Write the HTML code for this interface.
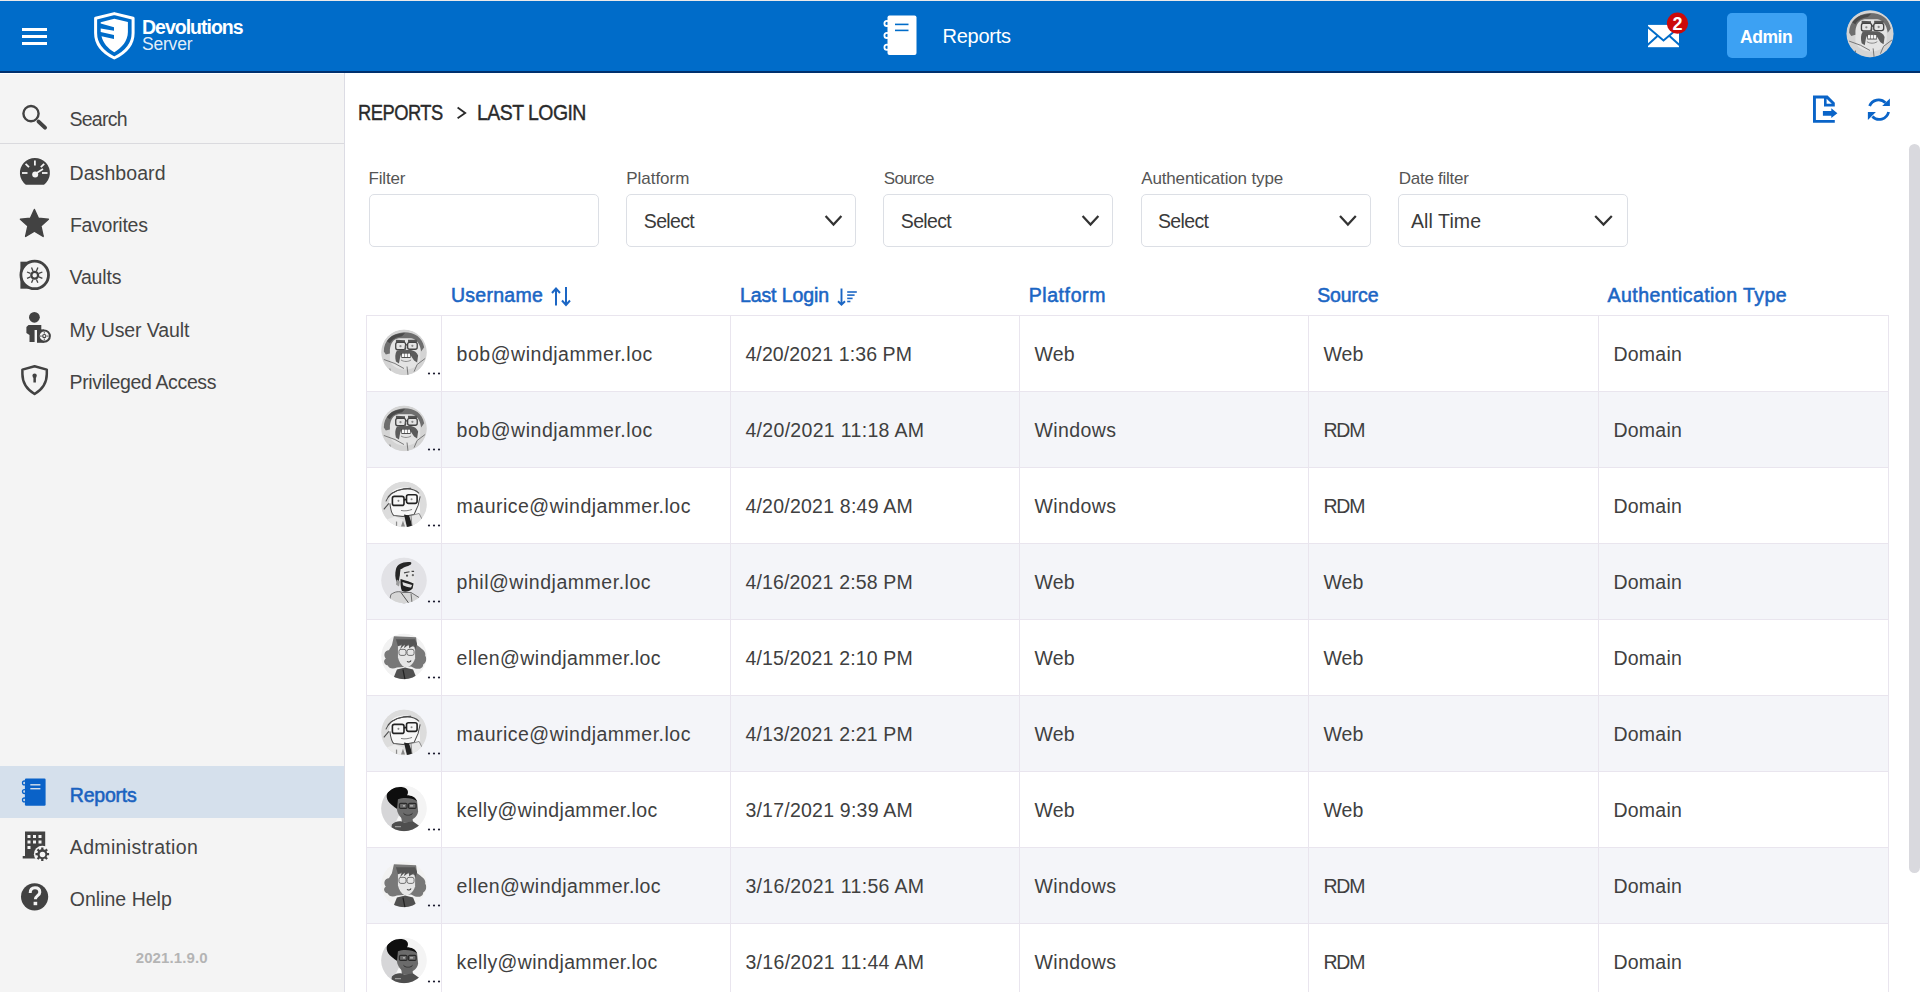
<!DOCTYPE html>
<html><head><meta charset="utf-8">
<style>
*{box-sizing:border-box;margin:0;padding:0}
html,body{width:1920px;height:992px;overflow:hidden;background:#fff;font-family:"Liberation Sans",sans-serif;color:#3a3a3a;position:relative}
.a{position:absolute}
.t{position:absolute;white-space:nowrap;line-height:1}
svg{position:absolute;overflow:visible}
</style></head>
<body>
<div class="a" style="left:0;top:0;width:1920px;height:1px;background:#ebe9e9"></div>
<div class="a" style="left:0;top:1px;width:1920px;height:70px;background:#006cc9"></div>
<div class="a" style="left:0;top:71px;width:1920px;height:2px;background:#00306e"></div>
<div class="a" style="left:0;top:74px;width:344px;height:918px;background:#f4f4f4"></div>
<div class="a" style="left:344px;top:73px;width:1px;height:919px;background:#dcdce4"></div>
<div class="a" style="left:0;top:143px;width:344px;height:1px;background:#dadade"></div>
<div class="a" style="left:0;top:766px;width:344px;height:52px;background:#d5e0ec"></div>
<div class="a" style="left:22px;top:28px;width:25px;height:3px;background:#fff"></div>
<div class="a" style="left:22px;top:35px;width:25px;height:3px;background:#fff"></div>
<div class="a" style="left:22px;top:42px;width:25px;height:3px;background:#fff"></div>
<div class="a" style="left:1727px;top:13px;width:80px;height:45px;background:#3ca1f3;border-radius:5px"></div>
<div class="a" style="left:369px;top:194px;width:230px;height:53px;border:1px solid #dcdfe5;border-radius:5px;background:#fff"></div>
<div class="a" style="left:626px;top:194px;width:230px;height:53px;border:1px solid #dcdfe5;border-radius:5px;background:#fff"></div>
<div class="a" style="left:883px;top:194px;width:230px;height:53px;border:1px solid #dcdfe5;border-radius:5px;background:#fff"></div>
<div class="a" style="left:1141px;top:194px;width:230px;height:53px;border:1px solid #dcdfe5;border-radius:5px;background:#fff"></div>
<div class="a" style="left:1398px;top:194px;width:230px;height:53px;border:1px solid #dcdfe5;border-radius:5px;background:#fff"></div>
<div class="a" style="left:366px;top:391px;width:1523px;height:76px;background:#f4f5f9"></div>
<div class="a" style="left:366px;top:543px;width:1523px;height:76px;background:#f4f5f9"></div>
<div class="a" style="left:366px;top:695px;width:1523px;height:76px;background:#f4f5f9"></div>
<div class="a" style="left:366px;top:847px;width:1523px;height:76px;background:#f4f5f9"></div>
<div class="a" style="left:366px;top:315px;width:1523px;height:1px;background:#e9e5ee"></div>
<div class="a" style="left:366px;top:391px;width:1523px;height:1px;background:#e9e5ee"></div>
<div class="a" style="left:366px;top:467px;width:1523px;height:1px;background:#e9e5ee"></div>
<div class="a" style="left:366px;top:543px;width:1523px;height:1px;background:#e9e5ee"></div>
<div class="a" style="left:366px;top:619px;width:1523px;height:1px;background:#e9e5ee"></div>
<div class="a" style="left:366px;top:695px;width:1523px;height:1px;background:#e9e5ee"></div>
<div class="a" style="left:366px;top:771px;width:1523px;height:1px;background:#e9e5ee"></div>
<div class="a" style="left:366px;top:847px;width:1523px;height:1px;background:#e9e5ee"></div>
<div class="a" style="left:366px;top:923px;width:1523px;height:1px;background:#e9e5ee"></div>
<div class="a" style="left:366px;top:999px;width:1523px;height:1px;background:#e9e5ee"></div>
<div class="a" style="left:366px;top:315px;width:1px;height:677px;background:#e9e5ee"></div>
<div class="a" style="left:441px;top:315px;width:1px;height:677px;background:#e9e5ee"></div>
<div class="a" style="left:730px;top:315px;width:1px;height:677px;background:#e9e5ee"></div>
<div class="a" style="left:1019px;top:315px;width:1px;height:677px;background:#e9e5ee"></div>
<div class="a" style="left:1308px;top:315px;width:1px;height:677px;background:#e9e5ee"></div>
<div class="a" style="left:1598px;top:315px;width:1px;height:677px;background:#e9e5ee"></div>
<div class="a" style="left:1888px;top:315px;width:1px;height:677px;background:#e9e5ee"></div>
<div class="a" style="left:1909px;top:144px;width:11px;height:729px;background:#d9d9de;border-radius:6px"></div>
<svg width="1920" height="992" style="left:0;top:0" viewBox="0 0 1920 992">
<!-- logo shield -->
<path d="M114.3 13.6 L95.6 18.3 L95.6 33 C95.6 44 103 52.5 114.3 58 C125.6 52.5 133.1 44 133.1 33 L133.1 18.3 Z" fill="none" stroke="#fff" stroke-width="3" stroke-linejoin="round"/>
<path d="M114.3 18.7 L100.7 22.3 L100.7 23.5 L114 27.2 L114 30.8 L100.7 28.4 L100.7 32 L114 35 L114 39 L101.5 36.2 C103 43 108 48.5 114.3 52.2 C121.5 48 127.9 41 127.9 32 L127.9 22 Z" fill="#fff"/>
<!-- header reports icon -->
<rect x="887.5" y="15.6" width="29" height="39.4" rx="2" fill="#fff"/>
<g fill="none" stroke="#fff" stroke-width="1.8">
<circle cx="887" cy="23.4" r="2.6"/><circle cx="887" cy="35.4" r="2.6"/><circle cx="887" cy="47.2" r="2.6"/>
</g>
<g stroke="#006cc9" stroke-width="1.6">
<line x1="895" y1="24.4" x2="908.5" y2="24.4"/><line x1="895" y1="30.4" x2="908.5" y2="30.4"/>
</g>
<!-- envelope -->
<rect x="1648" y="24.9" width="31" height="22.3" fill="#fff"/>
<g fill="none" stroke="#006cc9" stroke-width="2">
<polyline points="1647,26.5 1663.5,40.4 1680,26.5"/>
<line x1="1647" y1="45.5" x2="1657.5" y2="36"/><line x1="1680" y1="45.5" x2="1669.5" y2="36"/>
</g>
<circle cx="1677.5" cy="23.2" r="10.6" fill="#cc0a0a"/>
<text x="1677.6" y="30.4" font-family="Liberation Sans" font-weight="700" font-size="18" fill="#fff" text-anchor="middle">2</text>
<!-- sidebar icons -->
<g fill="#424242" stroke="#424242">
<!-- search -->
<circle cx="31" cy="113.6" r="7.6" fill="none" stroke-width="2.4"/>
<line x1="38.6" y1="121.6" x2="45" y2="127.6" stroke-width="4" stroke-linecap="round"/>
</g>
<!-- dashboard gauge -->
<path d="M25.8 184.8 A15 15 0 1 1 44 184.8 Z" fill="#424242"/>
<g stroke="#f4f4f4" stroke-width="1.8">
<line x1="34.9" y1="160.5" x2="34.9" y2="165.5"/>
<line x1="25.6" y1="163.8" x2="29" y2="167.2"/>
<line x1="44.2" y1="163.8" x2="40.8" y2="167.2"/>
<line x1="22" y1="173" x2="27.5" y2="173"/>
<line x1="42" y1="173" x2="47.5" y2="173"/>
<line x1="35" y1="174" x2="43" y2="169" stroke-width="1.6"/>
</g>
<circle cx="35.2" cy="174.5" r="3" fill="#f4f4f4"/>
<!-- star -->
<path d="M34.4 209.5 L38.4 218.3 L48.4 219.3 L40.9 225.9 L43.2 236.5 L34.4 231.2 L25.6 236.5 L27.9 225.9 L20.4 219.3 L30.4 218.3 Z" fill="#424242" stroke="#424242" stroke-width="1.4" stroke-linejoin="round"/>
<!-- vaults -->
<path d="M20.4 261.7 L35 261.7 L35 288.7 L20.4 288.7 Z" fill="#424242"/>
<circle cx="34.7" cy="274.9" r="13.8" fill="#f4f4f4" stroke="#424242" stroke-width="2.8"/>
<circle cx="34.7" cy="275.2" r="3.4" fill="none" stroke="#424242" stroke-width="2.3"/>
<g stroke="#424242" stroke-width="1.3">
<line x1="38.95" y1="276.96" x2="42.37" y2="278.38"/><line x1="36.46" y1="279.45" x2="37.88" y2="282.87"/><line x1="32.94" y1="279.45" x2="31.52" y2="282.87"/><line x1="30.45" y1="276.96" x2="27.03" y2="278.38"/><line x1="30.45" y1="273.44" x2="27.03" y2="272.02"/><line x1="32.94" y1="270.95" x2="31.52" y2="267.53"/><line x1="36.46" y1="270.95" x2="37.88" y2="267.53"/><line x1="38.95" y1="273.44" x2="42.37" y2="272.02"/>
</g>
<!-- my user vault -->
<circle cx="34.4" cy="317.3" r="5.4" fill="#424242"/>
<path d="M28.5 325 L41.3 325 L41.3 330 L34.6 330 L34.6 342 L29.5 342 L29.5 335 L26.4 333 L26.4 327 Z" fill="#424242"/>
<path d="M37 329.4 L44 329.4 L44 342.8 L37 342.8 Z" fill="#424242"/>
<circle cx="44.3" cy="336.1" r="5.6" fill="#f4f4f4" stroke="#424242" stroke-width="2"/>
<circle cx="44.3" cy="336.1" r="1.6" fill="none" stroke="#424242" stroke-width="1.2"/>
<g stroke="#424242" stroke-width="0.9">
<line x1="44.3" y1="331.8" x2="44.3" y2="333.6"/><line x1="44.3" y1="338.6" x2="44.3" y2="340.4"/>
<line x1="40" y1="336.1" x2="41.8" y2="336.1"/><line x1="46.8" y1="336.1" x2="48.6" y2="336.1"/>
</g>
<!-- privileged shield -->
<path d="M34.6 366.3 L22.4 369.6 L22.4 374 C22.4 383 27 389.5 34.6 394 C42.2 389.5 46.8 383 46.8 374 L46.8 369.6 Z" fill="none" stroke="#424242" stroke-width="2.5" stroke-linejoin="round"/>
<circle cx="34.6" cy="375.8" r="2.2" fill="#424242"/>
<rect x="33.4" y="376" width="2.5" height="6.5" fill="#424242"/>
<!-- reports icon (blue) -->
<rect x="24.9" y="778.5" width="20.7" height="27.2" rx="1.2" fill="#0a62c8"/>
<g fill="none" stroke="#0a62c8" stroke-width="1.3">
<circle cx="24.4" cy="782.9" r="1.9"/><circle cx="24.4" cy="791.6" r="1.9"/><circle cx="24.4" cy="799.9" r="1.9"/>
</g>
<g stroke="#d5e0ec" stroke-width="1.4">
<line x1="30.3" y1="784.8" x2="40.4" y2="784.8"/><line x1="30.3" y1="788.7" x2="40.4" y2="788.7"/>
</g>
<!-- administration -->
<path d="M25 831.5 L45.2 831.5 L45.2 858.4 L22.7 858.4 L22.7 856 L25 856 Z" fill="#424242"/>
<g fill="#f4f4f4">
<rect x="27.5" y="835" width="3" height="3"/><rect x="33" y="835" width="3" height="3"/><rect x="38.5" y="835" width="3" height="3"/>
<rect x="27.5" y="840.5" width="3" height="3"/><rect x="33" y="840.5" width="3" height="3"/><rect x="38.5" y="840.5" width="3" height="3"/>
<rect x="27.5" y="846" width="3" height="3"/>
</g>
<circle cx="42.3" cy="854.2" r="8.4" fill="#f4f4f4"/>
<path d="M47.18 853.11 L49.10 853.03 L49.10 855.37 L47.18 855.29 L46.92 856.11 L46.52 856.88 L47.93 858.18 L46.28 859.83 L44.98 858.42 L44.21 858.82 L43.39 859.08 L43.47 861.00 L41.13 861.00 L41.21 859.08 L40.39 858.82 L39.62 858.42 L38.32 859.83 L36.67 858.18 L38.08 856.88 L37.68 856.11 L37.42 855.29 L35.50 855.37 L35.50 853.03 L37.42 853.11 L37.68 852.29 L38.08 851.52 L36.67 850.22 L38.32 848.57 L39.62 849.98 L40.39 849.58 L41.21 849.32 L41.13 847.40 L43.47 847.40 L43.39 849.32 L44.21 849.58 L44.98 849.98 L46.28 848.57 L47.93 850.22 L46.52 851.52 L46.92 852.29 Z" fill="#424242"/>
<circle cx="42.5" cy="854.5" r="2.8" fill="#f4f4f4"/>
<!-- help -->
<circle cx="34.6" cy="896.8" r="13.6" fill="#424242"/>
<path d="M30.2 893 C30.2 889.5 32.2 887.8 35 887.8 C38 887.8 39.8 889.6 39.8 892.2 C39.8 895.5 35.4 895.8 35.4 899.2" fill="none" stroke="#f4f4f4" stroke-width="3"/>
<rect x="33.6" y="901.8" width="3.6" height="3.4" fill="#f4f4f4"/>
<!-- breadcrumb chevron -->
<polyline points="457.6,107.6 465.2,112.9 457.6,118.2" fill="none" stroke="#2a2a2a" stroke-width="1.8"/>
<!-- select chevrons -->
<g fill="none" stroke="#333" stroke-width="2.2">
<polyline points="825.6,216 833.5,224.6 841.4,216"/>
<polyline points="1082.6,216 1090.5,224.6 1098.4,216"/>
<polyline points="1340,216 1347.9,224.6 1355.8,216"/>
<polyline points="1595.2,216 1603.5,224.6 1611.8,216"/>
</g>
<!-- export icon -->
<path d="M1813 95.6 L1827.6 95.6 L1834.8 102.7 L1834.8 106.4 L1824 106.4 L1824 98.4 L1815.9 98.4 L1815.9 120 L1834.8 120 L1834.8 122.8 L1813 122.8 Z M1826.6 98.8 L1826.6 103.8 L1831.8 103.8 Z" fill="#0a64c8" fill-rule="evenodd"/>
<path d="M1822.9 110.9 L1831.3 110.9 L1831.3 108.3 L1837.4 113.2 L1831.3 118.1 L1831.3 115.8 L1822.9 115.8 Z" fill="#0a64c8"/>
<!-- refresh icon -->
<g fill="none" stroke="#0a64c8" stroke-width="2.8">
<path d="M1869.6 106 A9.6 9.6 0 0 1 1885.5 102.8"/>
<path d="M1888.6 112 A9.6 9.6 0 0 1 1872.4 116.5"/>
</g>
<path d="M1889.9 98.4 L1889.9 105.9 L1882.2 105.9 Z" fill="#0a64c8"/>
<path d="M1867.9 112 L1875.9 112 L1867.9 120 Z" fill="#0a64c8"/>
<!-- sort icons -->
<g fill="none" stroke="#1b66c4" stroke-width="2">
<path d="M556 305.5 L556 289 M552 293 L556 288.5 L560 293"/>
<path d="M566 287 L566 304.5 M562 300.5 L566 305 L570 300.5"/>
<path d="M841.5 288.5 L841.5 304.5 M838 301.3 L841.5 304.7 L845 301.3" stroke-width="1.9"/>
</g>
<g stroke="#1b66c4" stroke-width="1.6">
<line x1="847.2" y1="292" x2="856.8" y2="292"/><line x1="847.2" y1="295.1" x2="854.6" y2="295.1"/><line x1="847.2" y1="298.4" x2="852.6" y2="298.4"/><line x1="847.2" y1="301.5" x2="850.4" y2="301.5"/>
</g>
</svg>
<svg width="1920" height="992" style="left:0;top:0" viewBox="0 0 1920 992">
<defs>
<clipPath id="avc"><circle cx="23" cy="23" r="22.6"/></clipPath>
<symbol id="av-bob" viewBox="0 0 46 46"><g clip-path="url(#avc)">
<circle cx="23" cy="23" r="23" fill="#d4d4d4"/>
<path d="M9 16 C10 9 16 6 24 6 C32 6 38 9 39 16 L39 30 C38 36 32 40 24 40 C16 40 10 36 9 30 Z" fill="#e4e4e4"/>
<path d="M3 22 C3 12 10 4 23 3 C34 3 41 8 43 18 L40 22 C39 15 36 10 30 9 L18 9 C12 10 10 14 9 20 L9 24 L5 25 Z" fill="#6e6e6e"/>
<path d="M6 12 C10 6 16 4 24 4 L21 7 C15 8 11 10 9 14 Z" fill="#4a4a4a"/>
<path d="M15 10.5 L24 11 L24 13 L15 13.5 Z M27 10.5 L36 10.5 L36 13 L27 13 Z" fill="#555"/>
<g fill="none" stroke="#444" stroke-width="1.3">
<rect x="14.8" y="13" width="9.8" height="7.3" rx="2"/><rect x="26.6" y="13" width="9.5" height="6.9" rx="2"/>
<line x1="24.6" y1="15.5" x2="26.6" y2="15.5"/>
</g>
<circle cx="19.5" cy="16.8" r="1.1" fill="#888"/><circle cx="31.3" cy="16.5" r="1.1" fill="#888"/>
<path d="M19 20.5 L30 20.5 C33 21 36 23 37 26 L36 33 L33 31 C31 28 30 26 28 24 L21 24 C19 26 19 29 18 34 L15 32 C14 28 14 24 16 21 Z" fill="#5c5c5c"/>
<path d="M20 23.6 L29.8 23.6 L29.5 28.5 L20.5 28.5 Z" fill="#4a4a4a"/>
<g fill="#f8f8f8"><rect x="21" y="24.2" width="2.4" height="3.4"/><rect x="23.9" y="24.2" width="2.4" height="3.4"/><rect x="26.8" y="24.2" width="2.2" height="3.4"/></g>
<path d="M20 30.5 C23 32.5 27 32.5 30 30.5" fill="none" stroke="#777" stroke-width="0.8"/>
<path d="M24.2 16 L23.6 21 L25.6 21" fill="none" stroke="#666" stroke-width="0.8"/>
<g fill="none" stroke="#707070" stroke-width="0.9">
<path d="M3 30 L14 34 L23 39"/><path d="M44 29 L36 35 L33 42"/><path d="M9 39 L9.5 44"/><path d="M26 37 L27 46"/>
</g>
</g></symbol>

<symbol id="av-maurice" viewBox="0 0 46 46"><g clip-path="url(#avc)">
<circle cx="23" cy="23" r="23" fill="#dcdcdc"/>
<path d="M10 12 C14 5 30 4 38 11 L39 32 L30 34 L12 34 L8 22 Z" fill="#f7f7f7"/>
<g fill="none" stroke="#4a4a4a" stroke-width="1">
<path d="M5 20 C8 12 14 9 22 8 C28 7 34 8 38 12"/><path d="M7 16 C12 10 20 7 30 7"/>
<path d="M9 22 C10 30 11 33 13 34 L22 35 L33 33 L37 24 L39 15"/>
<path d="M3 28 L8 22"/>
</g>
<g fill="none" stroke="#222" stroke-width="1.6">
<rect x="11.5" y="15" width="11.5" height="9" rx="2"/><rect x="25.5" y="13.5" width="10.5" height="8.5" rx="2"/>
<line x1="23" y1="18.5" x2="25.5" y2="18"/>
</g>
<circle cx="17.5" cy="19.5" r="1" fill="#888"/><circle cx="30.5" cy="18" r="1" fill="#888"/>
<path d="M20 29 C24 30 28 29 31 28" fill="none" stroke="#666" stroke-width="0.8"/>
<path d="M6 38 L14 35 L22 38 L26 46 L4 46 Z" fill="#ececec"/>
<path d="M23 33 L28 34 L32 46 L26 46 Z" fill="#222"/>
<g fill="#8a8a8a"><rect x="15" y="40" width="1.2" height="5"/><path d="M20 45 L22 39 L24 45 Z"/></g>
<path d="M30 34 L38 32 L42 40 L36 46 L31 46 Z" fill="#e8e8e8" stroke="#666" stroke-width="0.7"/>
</g></symbol>

<symbol id="av-phil" viewBox="0 0 46 46"><g clip-path="url(#avc)">
<circle cx="23" cy="23" r="23" fill="#e2e2e6"/>
<path d="M15 12 C16 7 22 4 30 5 C31 7 29 8 26 9 C22 10 20 12 19.5 16 L18 24 L16 25 C14 21 14 16 15 12 Z" fill="#262626"/>
<path d="M19.5 12 C24 9.5 30 10 33 13 L34 26 C34 31 31 34 27 34 L20 33 L18 26 Z" fill="#e6e6e6"/>
<path d="M16 22 L19 24 L18 29 L15 27 Z" fill="#9a9a9a"/>
<g fill="none" stroke="#444" stroke-width="1.1"><path d="M23 15.5 L28.5 14.5"/><path d="M30.5 14 L33 14"/></g>
<circle cx="26" cy="18.3" r="1.1" fill="#555"/><circle cx="31.8" cy="17.8" r="1.1" fill="#666"/>
<path d="M19.5 21.5 C22 22 28 24 32.5 26 L31.5 31 C28.5 34 24 35 21 33.5 C19.5 30.5 19.5 26 19.5 21.5 Z" fill="#222"/>
<path d="M21.5 24.5 C24 25.5 28 26.5 31 27.5 L30 30 C27 30 24 29 22 27.8 Z" fill="#e0e0e0"/>
<path d="M10 37 C14 34 18 33.5 22 35 L30 35 L38 40 L40 46 L8 46 Z" fill="#d6d6d6" stroke="#555" stroke-width="0.8"/>
<path d="M20 35 L28 46" fill="none" stroke="#444" stroke-width="0.9"/>
<path d="M30 36 L31 46" fill="none" stroke="#555" stroke-width="0.8"/>
</g></symbol>

<symbol id="av-ellen" viewBox="0 0 46 46"><g clip-path="url(#avc)">
<circle cx="23" cy="23" r="23" fill="#f2f2f2"/>
<path d="M13 3 L35 4 L36 12 C40 15 45 18 44 22 C46 25 45 30 42 31 C42 35 38 36 34 35 L30 33 L16 34 C12 36 8 35 7 32 C3 31 2 27 5 25 C2 22 4 17 8 17 L11 12 Z" fill="#787878"/>
<path d="M17 13 C22 11 30 12 34 14 L34 25 C32 31 28 34 24 34 C20 32 18 28 17 24 Z" fill="#e6e6e6"/>
<path d="M17 13 L21 11 L19 16 L24 11 L23 15 L28 11 L28 15 L33 12 L34 17 L36 11 L34 6 L15 6 Z" fill="#555"/>
<g fill="none" stroke="#555" stroke-width="0.8"><rect x="18" y="16" width="7" height="6" rx="2"/><rect x="26" y="16" width="7" height="6" rx="2"/></g>
<path d="M26 28 C27 29 29 29 30 27" fill="none" stroke="#333" stroke-width="1"/>
<path d="M16 36 L24 34 L32 36 L36 46 L12 46 Z" fill="#505050"/>
<path d="M22 36 L24 46" stroke="#222" stroke-width="1.2"/>
</g></symbol>

<symbol id="av-kelly" viewBox="0 0 46 46"><g clip-path="url(#avc)">
<circle cx="23" cy="23" r="23" fill="#f4f4f4"/>
<path d="M0 10 L14 8 L18 30 L10 46 L0 46 Z" fill="#d6d6d8"/>
<path d="M6 9 C8 4 14 1 22 2 C27 3 28 7 26 10 C30 10 35 12 36 16 L28 16 L19 16 L17 24 L14 22 C8 18 5 14 6 9 Z" fill="#0e0e0e"/>
<path d="M17 14 C22 12 31 12 36 16 L37 26 C36 32 31 35 26 35 C21 34 17 30 16 24 Z" fill="#6b6b6b"/>
<g fill="none" stroke="#2a2a2a" stroke-width="1.2"><rect x="18.5" y="18" width="7.5" height="5" rx="1.2"/><rect x="27.5" y="18" width="7.5" height="5" rx="1.2"/></g>
<path d="M22 20.5 L24 20.5 M29 20.5 L32 20.5" stroke="#ddd" stroke-width="0.9"/>
<path d="M22 27 C25 30 29 30 32 27 C30 32 24 32 22 27 Z" fill="#333"/>
<path d="M20 30 L31 30 L32 37 L21 37 Z" fill="#666"/>
<path d="M11 39 C15 35 20 35 23 37 L32 36 L39 41 L40 46 L10 46 Z" fill="#4e4e4e"/>
<path d="M14 41 L20 41" stroke="#9a9a9a" stroke-width="1.2"/>
</g></symbol>
</defs>
<use href="#av-bob" x="1846" y="9.8" width="48" height="48"/>
<use href="#av-bob" x="380.8" y="329.2" width="46.4" height="46.4"/>
<circle cx="429" cy="373.5" r="1.1" fill="#1c1c30"/>
<circle cx="434" cy="373.5" r="1.1" fill="#1c1c30"/>
<circle cx="439" cy="373.5" r="1.1" fill="#1c1c30"/>
<use href="#av-bob" x="380.8" y="405.2" width="46.4" height="46.4"/>
<circle cx="429" cy="449.5" r="1.1" fill="#1c1c30"/>
<circle cx="434" cy="449.5" r="1.1" fill="#1c1c30"/>
<circle cx="439" cy="449.5" r="1.1" fill="#1c1c30"/>
<use href="#av-maurice" x="380.8" y="481.2" width="46.4" height="46.4"/>
<circle cx="429" cy="525.5" r="1.1" fill="#1c1c30"/>
<circle cx="434" cy="525.5" r="1.1" fill="#1c1c30"/>
<circle cx="439" cy="525.5" r="1.1" fill="#1c1c30"/>
<use href="#av-phil" x="380.8" y="557.2" width="46.4" height="46.4"/>
<circle cx="429" cy="601.5" r="1.1" fill="#1c1c30"/>
<circle cx="434" cy="601.5" r="1.1" fill="#1c1c30"/>
<circle cx="439" cy="601.5" r="1.1" fill="#1c1c30"/>
<use href="#av-ellen" x="380.8" y="633.2" width="46.4" height="46.4"/>
<circle cx="429" cy="677.5" r="1.1" fill="#1c1c30"/>
<circle cx="434" cy="677.5" r="1.1" fill="#1c1c30"/>
<circle cx="439" cy="677.5" r="1.1" fill="#1c1c30"/>
<use href="#av-maurice" x="380.8" y="709.2" width="46.4" height="46.4"/>
<circle cx="429" cy="753.5" r="1.1" fill="#1c1c30"/>
<circle cx="434" cy="753.5" r="1.1" fill="#1c1c30"/>
<circle cx="439" cy="753.5" r="1.1" fill="#1c1c30"/>
<use href="#av-kelly" x="380.8" y="785.2" width="46.4" height="46.4"/>
<circle cx="429" cy="829.5" r="1.1" fill="#1c1c30"/>
<circle cx="434" cy="829.5" r="1.1" fill="#1c1c30"/>
<circle cx="439" cy="829.5" r="1.1" fill="#1c1c30"/>
<use href="#av-ellen" x="380.8" y="861.2" width="46.4" height="46.4"/>
<circle cx="429" cy="905.5" r="1.1" fill="#1c1c30"/>
<circle cx="434" cy="905.5" r="1.1" fill="#1c1c30"/>
<circle cx="439" cy="905.5" r="1.1" fill="#1c1c30"/>
<use href="#av-kelly" x="380.8" y="937.2" width="46.4" height="46.4"/>
<circle cx="429" cy="981.5" r="1.1" fill="#1c1c30"/>
<circle cx="434" cy="981.5" r="1.1" fill="#1c1c30"/>
<circle cx="439" cy="981.5" r="1.1" fill="#1c1c30"/></svg>
<div class="t" style="left:69.5px;top:109.99px;font-size:19.5px;font-weight:400;color:#444444;letter-spacing:-0.759px;">Search</div>
<div class="t" style="left:69.5px;top:163.99px;font-size:19.5px;font-weight:400;color:#444444;letter-spacing:0.074px;">Dashboard</div>
<div class="t" style="left:69.9px;top:216.19px;font-size:19.5px;font-weight:400;color:#444444;letter-spacing:-0.275px;">Favorites</div>
<div class="t" style="left:69.5px;top:267.99px;font-size:19.5px;font-weight:400;color:#444444;letter-spacing:-0.150px;">Vaults</div>
<div class="t" style="left:69.5px;top:321.29px;font-size:19.5px;font-weight:400;color:#444444;letter-spacing:-0.083px;">My User Vault</div>
<div class="t" style="left:69.5px;top:372.79px;font-size:19.5px;font-weight:400;color:#444444;letter-spacing:-0.364px;">Privileged Access</div>
<div class="t" style="left:69.8px;top:785.99px;font-size:19.5px;font-weight:400;color:#1a62c0;letter-spacing:-0.214px;-webkit-text-stroke:0.55px #1a62c0;">Reports</div>
<div class="t" style="left:69.8px;top:838.49px;font-size:19.5px;font-weight:400;color:#444444;letter-spacing:0.341px;">Administration</div>
<div class="t" style="left:69.8px;top:889.99px;font-size:19.5px;font-weight:400;color:#444444;letter-spacing:0.011px;">Online Help</div>
<div class="t" style="left:135.7px;top:949.70px;font-size:15px;font-weight:700;color:#b4b4b4;letter-spacing:0.122px;">2021.1.9.0</div>
<div class="t" style="left:942.5px;top:26.17px;font-size:20px;font-weight:400;color:#ffffff;letter-spacing:-0.255px;">Reports</div>
<div class="t" style="left:1740.0px;top:28.79px;font-size:17.5px;font-weight:700;color:#ffffff;letter-spacing:-0.438px;">Admin</div>
<div class="t" style="left:142.0px;top:18.49px;font-size:19.5px;font-weight:700;color:#ffffff;letter-spacing:-1.059px;letter-spacing:-1px;">Devolutions</div>
<div class="t" style="left:142.0px;top:35.69px;font-size:17.5px;font-weight:400;color:rgba(255,255,255,0.9);letter-spacing:-0.209px;">Server</div>
<div class="t" style="left:358.4px;top:102.18px;font-size:22px;font-weight:400;color:#2a2a2a;letter-spacing:-0.6px;transform:scaleX(0.8324);transform-origin:0 0;-webkit-text-stroke:0.4px #2a2a2a;">REPORTS</div>
<div class="t" style="left:476.5px;top:102.18px;font-size:22px;font-weight:400;color:#2a2a2a;letter-spacing:-0.6px;transform:scaleX(0.8837);transform-origin:0 0;-webkit-text-stroke:0.4px #2a2a2a;">LAST LOGIN</div>
<div class="t" style="left:368.6px;top:169.91px;font-size:17px;font-weight:400;color:#555555;letter-spacing:-0.216px;">Filter</div>
<div class="t" style="left:626.3px;top:169.91px;font-size:17px;font-weight:400;color:#555555;letter-spacing:-0.042px;">Platform</div>
<div class="t" style="left:883.8px;top:169.91px;font-size:17px;font-weight:400;color:#555555;letter-spacing:-0.655px;">Source</div>
<div class="t" style="left:1141.2px;top:169.91px;font-size:17px;font-weight:400;color:#555555;letter-spacing:-0.145px;">Authentication type</div>
<div class="t" style="left:1398.8px;top:169.91px;font-size:17px;font-weight:400;color:#555555;letter-spacing:-0.265px;">Date filter</div>
<div class="t" style="left:643.8px;top:212.29px;font-size:19.5px;font-weight:400;color:#3a3a3a;letter-spacing:-0.641px;">Select</div>
<div class="t" style="left:900.8px;top:212.29px;font-size:19.5px;font-weight:400;color:#3a3a3a;letter-spacing:-0.641px;">Select</div>
<div class="t" style="left:1158.0px;top:212.29px;font-size:19.5px;font-weight:400;color:#3a3a3a;letter-spacing:-0.641px;">Select</div>
<div class="t" style="left:1411.0px;top:212.29px;font-size:19.5px;font-weight:400;color:#3a3a3a;letter-spacing:0.092px;">All Time</div>
<div class="t" style="left:450.9px;top:285.89px;font-size:19.5px;font-weight:400;color:#1b66c4;letter-spacing:0.292px;-webkit-text-stroke:0.55px #1b66c4;">Username</div>
<div class="t" style="left:740.0px;top:285.89px;font-size:19.5px;font-weight:400;color:#1b66c4;letter-spacing:-0.111px;-webkit-text-stroke:0.55px #1b66c4;">Last Login</div>
<div class="t" style="left:1028.7px;top:285.89px;font-size:19.5px;font-weight:400;color:#1b66c4;letter-spacing:0.584px;-webkit-text-stroke:0.55px #1b66c4;">Platform</div>
<div class="t" style="left:1317.2px;top:285.89px;font-size:19.5px;font-weight:400;color:#1b66c4;letter-spacing:-0.099px;-webkit-text-stroke:0.55px #1b66c4;">Source</div>
<div class="t" style="left:1607.6px;top:285.89px;font-size:19.5px;font-weight:400;color:#1b66c4;letter-spacing:0.448px;-webkit-text-stroke:0.55px #1b66c4;">Authentication Type</div>
<div class="t" style="left:456.6px;top:345.19px;font-size:19.5px;font-weight:400;color:#404040;letter-spacing:0.528px;">bob@windjammer.loc</div>
<div class="t" style="left:745.4px;top:345.19px;font-size:19.5px;font-weight:400;color:#404040;letter-spacing:0.113px;">4/20/2021 1:36 PM</div>
<div class="t" style="left:1034.5px;top:345.19px;font-size:19.5px;font-weight:400;color:#404040;letter-spacing:0.125px;">Web</div>
<div class="t" style="left:1323.4px;top:345.19px;font-size:19.5px;font-weight:400;color:#404040;letter-spacing:0.125px;">Web</div>
<div class="t" style="left:1613.4px;top:345.19px;font-size:19.5px;font-weight:400;color:#404040;letter-spacing:0.259px;">Domain</div>
<div class="t" style="left:456.6px;top:421.19px;font-size:19.5px;font-weight:400;color:#404040;letter-spacing:0.528px;">bob@windjammer.loc</div>
<div class="t" style="left:745.4px;top:421.19px;font-size:19.5px;font-weight:400;color:#404040;letter-spacing:0.322px;">4/20/2021 11:18 AM</div>
<div class="t" style="left:1034.5px;top:421.19px;font-size:19.5px;font-weight:400;color:#404040;letter-spacing:0.398px;">Windows</div>
<div class="t" style="left:1323.4px;top:421.19px;font-size:19.5px;font-weight:400;color:#404040;letter-spacing:-1.211px;">RDM</div>
<div class="t" style="left:1613.4px;top:421.19px;font-size:19.5px;font-weight:400;color:#404040;letter-spacing:0.259px;">Domain</div>
<div class="t" style="left:456.6px;top:497.19px;font-size:19.5px;font-weight:400;color:#404040;letter-spacing:0.489px;">maurice@windjammer.loc</div>
<div class="t" style="left:745.4px;top:497.19px;font-size:19.5px;font-weight:400;color:#404040;letter-spacing:0.230px;">4/20/2021 8:49 AM</div>
<div class="t" style="left:1034.5px;top:497.19px;font-size:19.5px;font-weight:400;color:#404040;letter-spacing:0.398px;">Windows</div>
<div class="t" style="left:1323.4px;top:497.19px;font-size:19.5px;font-weight:400;color:#404040;letter-spacing:-1.211px;">RDM</div>
<div class="t" style="left:1613.4px;top:497.19px;font-size:19.5px;font-weight:400;color:#404040;letter-spacing:0.259px;">Domain</div>
<div class="t" style="left:456.6px;top:573.19px;font-size:19.5px;font-weight:400;color:#404040;letter-spacing:0.526px;">phil@windjammer.loc</div>
<div class="t" style="left:745.4px;top:573.19px;font-size:19.5px;font-weight:400;color:#404040;letter-spacing:0.163px;">4/16/2021 2:58 PM</div>
<div class="t" style="left:1034.5px;top:573.19px;font-size:19.5px;font-weight:400;color:#404040;letter-spacing:0.125px;">Web</div>
<div class="t" style="left:1323.4px;top:573.19px;font-size:19.5px;font-weight:400;color:#404040;letter-spacing:0.125px;">Web</div>
<div class="t" style="left:1613.4px;top:573.19px;font-size:19.5px;font-weight:400;color:#404040;letter-spacing:0.259px;">Domain</div>
<div class="t" style="left:456.6px;top:649.19px;font-size:19.5px;font-weight:400;color:#404040;letter-spacing:0.454px;">ellen@windjammer.loc</div>
<div class="t" style="left:745.4px;top:649.19px;font-size:19.5px;font-weight:400;color:#404040;letter-spacing:0.163px;">4/15/2021 2:10 PM</div>
<div class="t" style="left:1034.5px;top:649.19px;font-size:19.5px;font-weight:400;color:#404040;letter-spacing:0.125px;">Web</div>
<div class="t" style="left:1323.4px;top:649.19px;font-size:19.5px;font-weight:400;color:#404040;letter-spacing:0.125px;">Web</div>
<div class="t" style="left:1613.4px;top:649.19px;font-size:19.5px;font-weight:400;color:#404040;letter-spacing:0.259px;">Domain</div>
<div class="t" style="left:456.6px;top:725.19px;font-size:19.5px;font-weight:400;color:#404040;letter-spacing:0.489px;">maurice@windjammer.loc</div>
<div class="t" style="left:745.4px;top:725.19px;font-size:19.5px;font-weight:400;color:#404040;letter-spacing:0.163px;">4/13/2021 2:21 PM</div>
<div class="t" style="left:1034.5px;top:725.19px;font-size:19.5px;font-weight:400;color:#404040;letter-spacing:0.125px;">Web</div>
<div class="t" style="left:1323.4px;top:725.19px;font-size:19.5px;font-weight:400;color:#404040;letter-spacing:0.125px;">Web</div>
<div class="t" style="left:1613.4px;top:725.19px;font-size:19.5px;font-weight:400;color:#404040;letter-spacing:0.259px;">Domain</div>
<div class="t" style="left:456.6px;top:801.19px;font-size:19.5px;font-weight:400;color:#404040;letter-spacing:0.390px;">kelly@windjammer.loc</div>
<div class="t" style="left:745.4px;top:801.19px;font-size:19.5px;font-weight:400;color:#404040;letter-spacing:0.230px;">3/17/2021 9:39 AM</div>
<div class="t" style="left:1034.5px;top:801.19px;font-size:19.5px;font-weight:400;color:#404040;letter-spacing:0.125px;">Web</div>
<div class="t" style="left:1323.4px;top:801.19px;font-size:19.5px;font-weight:400;color:#404040;letter-spacing:0.125px;">Web</div>
<div class="t" style="left:1613.4px;top:801.19px;font-size:19.5px;font-weight:400;color:#404040;letter-spacing:0.259px;">Domain</div>
<div class="t" style="left:456.6px;top:877.19px;font-size:19.5px;font-weight:400;color:#404040;letter-spacing:0.454px;">ellen@windjammer.loc</div>
<div class="t" style="left:745.4px;top:877.19px;font-size:19.5px;font-weight:400;color:#404040;letter-spacing:0.322px;">3/16/2021 11:56 AM</div>
<div class="t" style="left:1034.5px;top:877.19px;font-size:19.5px;font-weight:400;color:#404040;letter-spacing:0.398px;">Windows</div>
<div class="t" style="left:1323.4px;top:877.19px;font-size:19.5px;font-weight:400;color:#404040;letter-spacing:-1.211px;">RDM</div>
<div class="t" style="left:1613.4px;top:877.19px;font-size:19.5px;font-weight:400;color:#404040;letter-spacing:0.259px;">Domain</div>
<div class="t" style="left:456.6px;top:953.19px;font-size:19.5px;font-weight:400;color:#404040;letter-spacing:0.390px;">kelly@windjammer.loc</div>
<div class="t" style="left:745.4px;top:953.19px;font-size:19.5px;font-weight:400;color:#404040;letter-spacing:0.322px;">3/16/2021 11:44 AM</div>
<div class="t" style="left:1034.5px;top:953.19px;font-size:19.5px;font-weight:400;color:#404040;letter-spacing:0.398px;">Windows</div>
<div class="t" style="left:1323.4px;top:953.19px;font-size:19.5px;font-weight:400;color:#404040;letter-spacing:-1.211px;">RDM</div>
<div class="t" style="left:1613.4px;top:953.19px;font-size:19.5px;font-weight:400;color:#404040;letter-spacing:0.259px;">Domain</div>
</body></html>
